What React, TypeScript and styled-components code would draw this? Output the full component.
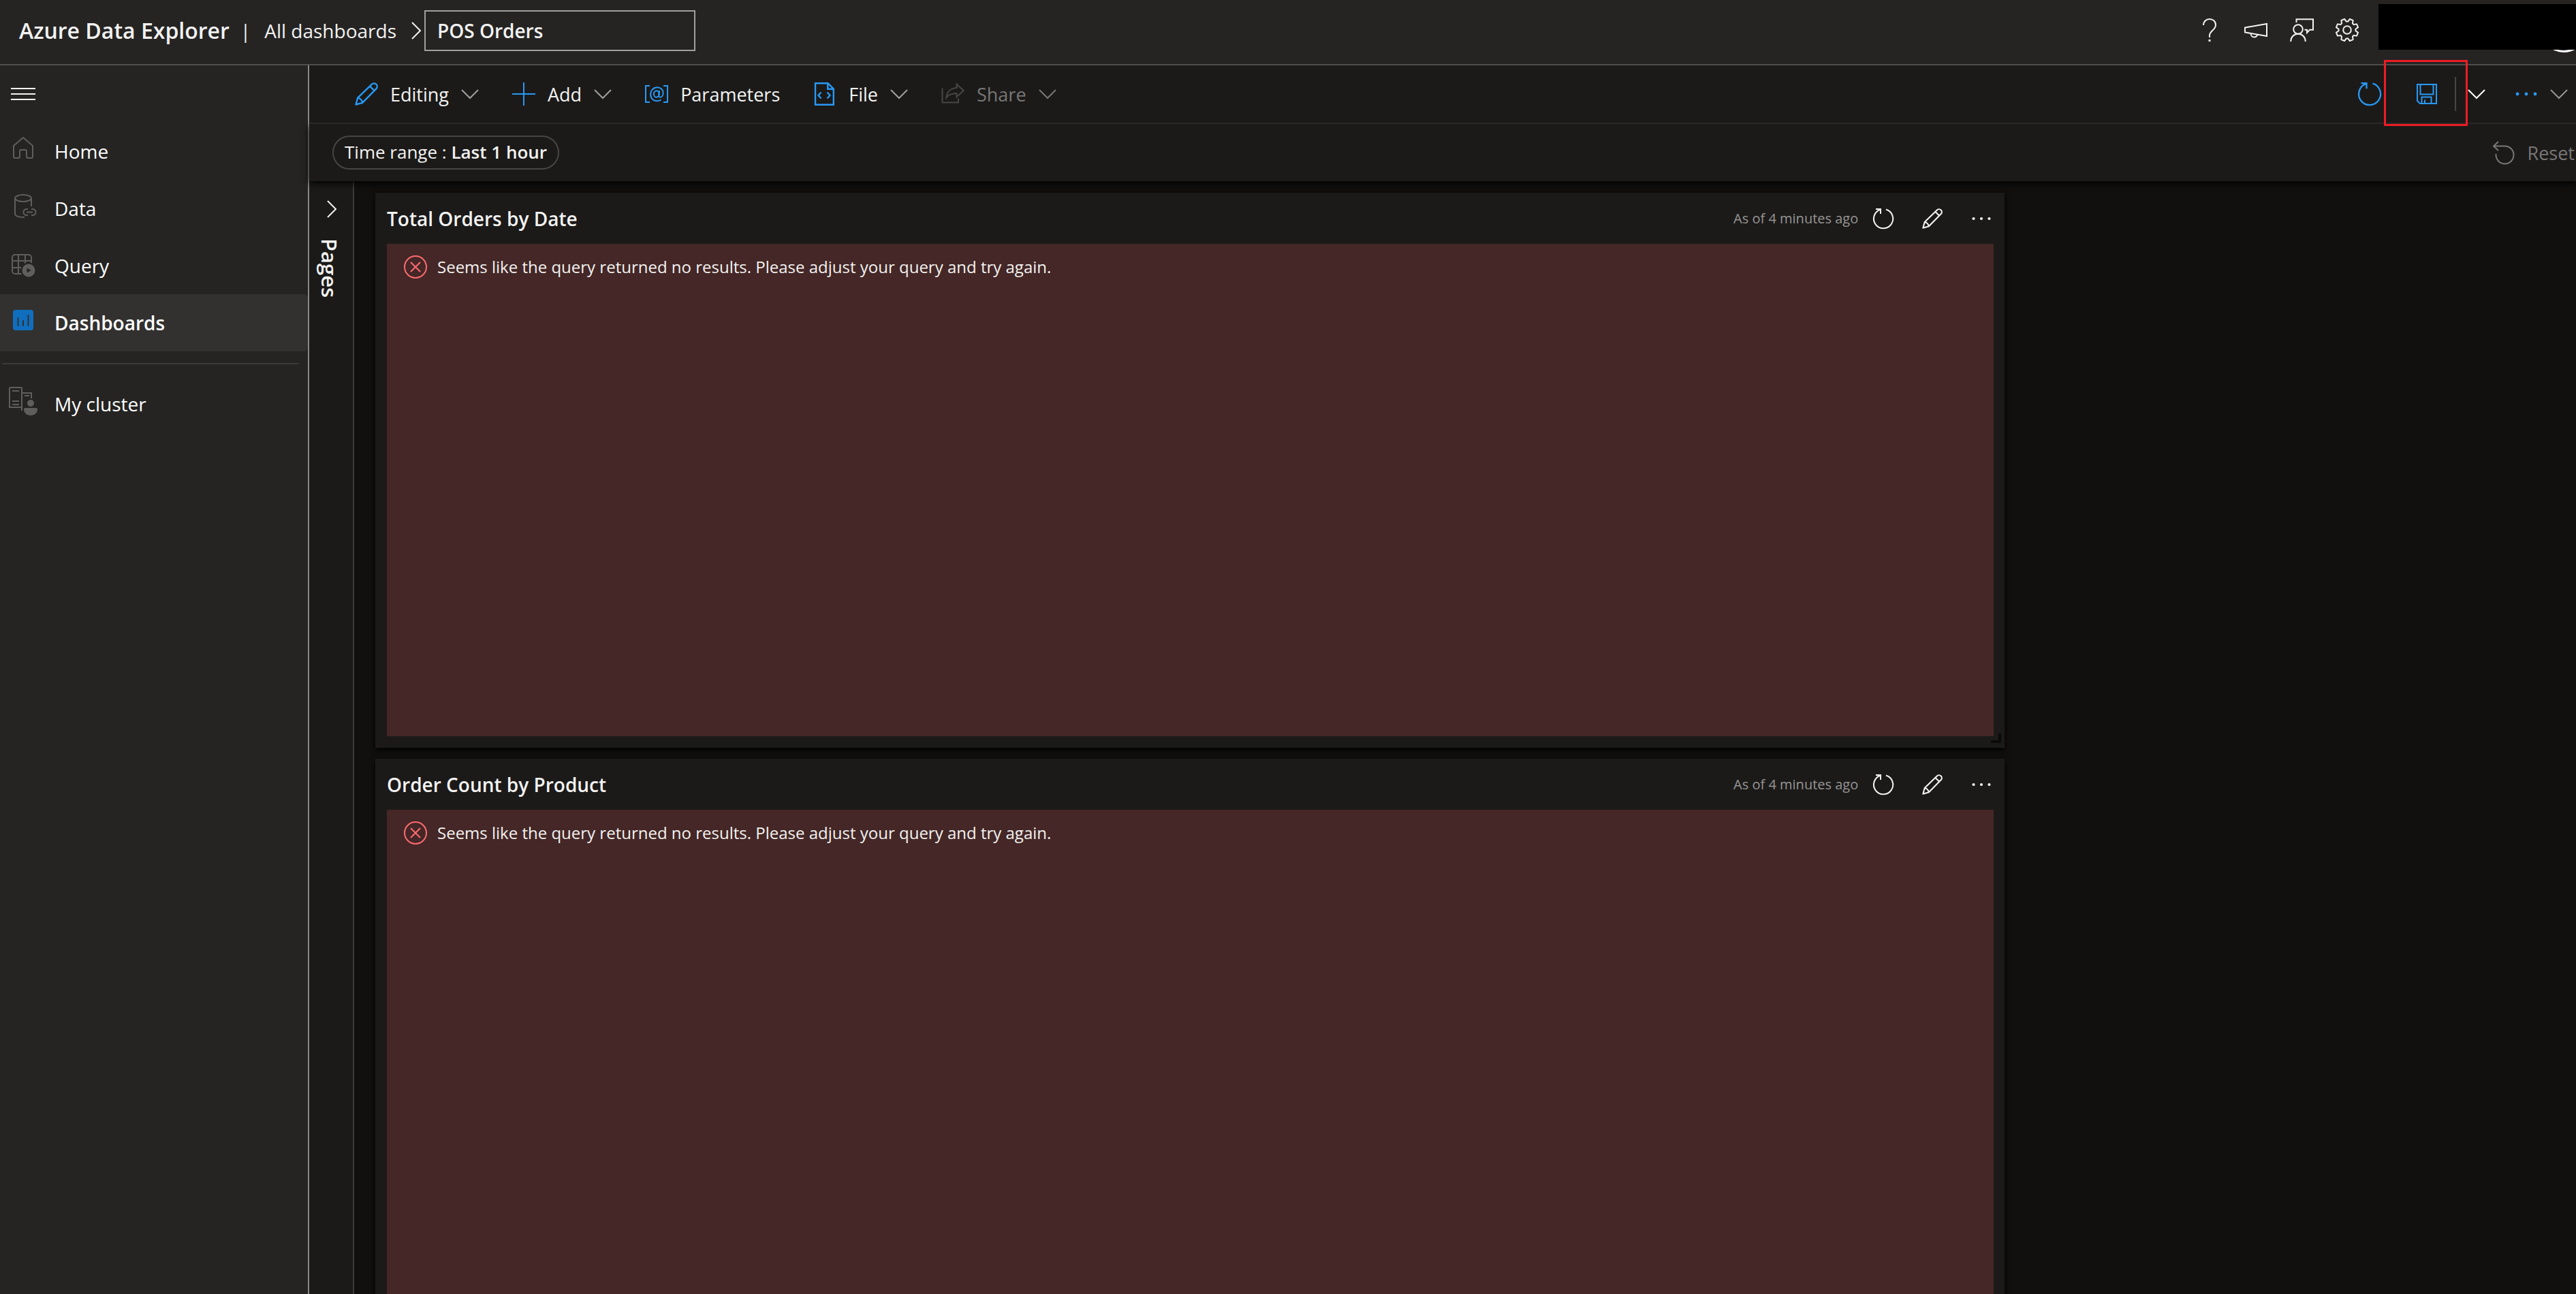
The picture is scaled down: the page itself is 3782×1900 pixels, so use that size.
import React from "react";
import styled, { createGlobalStyle } from "styled-components";

const color = {
  chrome: "#252423",
  surface: "#1b1a19",
  canvas: "#11100f",
  selected: "#323130",
  text: "#f3f2f1",
  muted: "#979593",
  disabled: "#797775",
  line: "#484644",
  blue: "#2899f5",
  errorBg: "#442726",
  error: "#ff6b70",
};

const GlobalStyle = createGlobalStyle`
  *, *::before, *::after { box-sizing: border-box; }
  body {
    margin: 0;
    background: ${color.canvas};
    color: ${color.text};
    font-family: "Open Sans", "Noto Sans", sans-serif;
    font-size: 28px;
    overflow: hidden;
  }
  button, input {
    font: inherit;
    color: inherit;
    background: none;
    border: 0;
    padding: 0;
    margin: 0;
  }
  svg { display: block; flex: none; overflow: visible; }
`;

/* ---------- icons ---------- */

const Svg = styled.svg.attrs({ "aria-hidden": true })<{ $w?: number; $h?: number; $color?: string }>`
  width: ${(p) => p.$w ?? 34}px;
  height: ${(p) => p.$h ?? p.$w ?? 34}px;
  color: ${(p) => p.$color ?? "inherit"};
  fill: none;
  stroke: currentColor;
  stroke-width: 2;
`;

type IconProps = { size?: number; tint?: string };

const ChevronDown = ({ tint }: IconProps) => (
  <Svg viewBox="0 0 26 14" $w={26} $h={14} $color={tint}>
    <path d="M1 1l12 12L25 1" />
  </Svg>
);

const ChevronRight = () => (
  <Svg viewBox="0 0 14 26" $w={14} $h={26}>
    <path d="M1 1l12 12L1 25" />
  </Svg>
);

const Pencil = ({ size, tint }: IconProps) => (
  <Svg viewBox="0 0 34 34" $w={size} $color={tint} strokeLinejoin="round">
    <path
      strokeWidth="2.4"
      d="M1.5 32.5L4.2 22.6 25 2.6a4.6 4.6 0 0 1 6.5 6.5L11.2 29.8zM22 5.6l6.4 6.4M4.2 22.6c3.4.6 6.4 3.8 7 7.2"
    />
  </Svg>
);

const Plus = ({ tint }: IconProps) => (
  <Svg viewBox="0 0 34 34" $color={tint}>
    <path d="M17 0v34M0 17h34" />
  </Svg>
);

const Parameter = ({ tint }: IconProps) => (
  <Svg viewBox="0 0 34 34" $color={tint}>
    <path d="M7 5H1v24h6M27 5h6v24h-6" />
    <path d="M23.5 25.5c-1.8 1.2-3.8 1.8-6 1.8-5.4 0-9.3-4-9.3-9.8 0-6 4.2-10.3 9.8-10.3 5 0 8.600 3.300 8.600 8.200 0 3.800-1.800 6.300-4.200 6.300-1.600 0-2.300-1-2.100-2.700l.9-7" />
    <ellipse cx="16.8" cy="17" rx="3.9" ry="4.8" />
  </Svg>
);

const CodeFile = ({ tint }: IconProps) => (
  <Svg viewBox="0 0 34 34" $color={tint}>
    <path strokeWidth="2.4" d="M3 1.2h18.5l8.3 8.3v23.3H3zM21.3 1.2v8.600h8.500M11.500 14.500L7.500 19l4 4.500M20.500 14.500l4 4.500-4 4.500" />
  </Svg>
);

const Share = ({ tint }: IconProps) => (
  <Svg viewBox="0 0 34 34" $color={tint}>
    <path d="M1.5 8.5v21H25v-6M22.5 2.5l10.200 9.500-10.200 9.500v-5.500c-7 0-12 2-15.200 6.500.6-8.500 6.200-14 15.200-14.500z" />
  </Svg>
);

const Refresh = ({ size, tint }: IconProps) => (
  <Svg viewBox="0 0 34 34" $w={size} $color={tint}>
    <path strokeWidth="2.3" d="M21.500 1.700A16 16 0 1 1 12 1.900M4.500 1.200h8v8" />
  </Svg>
);

const Save = ({ tint }: IconProps) => (
  <Svg viewBox="0 0 34 34" $color={tint}>
    <path d="M3 3h28v28H7l-4-4zM7.500 3v14.500h19V3M9.500 31v-9.500h14V31M14 25.500V31" />
  </Svg>
);

const Reset = () => (
  <Svg viewBox="0 0 34 34">
    <path d="M9 1L2 7.500 9 14M2 7.500h16.500a13 13 0 1 1-13 13V19" />
  </Svg>
);

const More = ({ size, tint }: IconProps) => (
  <Svg viewBox="0 0 34 34" $w={size} $color={tint}>
    <g fill="currentColor" stroke="none">
      <circle cx="4" cy="17" r="2.4" />
      <circle cx="17" cy="17" r="2.4" />
      <circle cx="30" cy="17" r="2.4" />
    </g>
  </Svg>
);

const Help = () => (
  <Svg viewBox="0 0 34 34">
    <path d="M7 10c0-5.500 4-9 9-9s9 3.300 9 8.500c0 3.300-1.600 5.300-4.200 7.700S16 21.500 16 25v3" />
    <path strokeWidth="3" d="M16 31v3" />
  </Svg>
);

const Megaphone = () => (
  <Svg viewBox="0 0 34 34">
    <path d="M1 13.500L33 8v18L1 20.500zM9.500 22c0 3 2 5.500 4.800 5.500s4.500-1.700 5-4" />
  </Svg>
);

const Feedback = () => (
  <Svg viewBox="0 0 34 34">
    <path d="M9.500 6V1.300H34v15.500h-5L25 21v-4.200h-3.500" />
    <circle cx="12" cy="16" r="6.8" />
    <path d="M1.200 34c0-6.500 4.500-11.200 10.800-11.200S22.800 27.500 22.800 34" />
  </Svg>
);

const gearOutline = (() => {
  const at = (deg: number, r: number) => {
    const a = (deg * Math.PI) / 180;
    return `${(17 + r * Math.sin(a)).toFixed(2)} ${(17 - r * Math.cos(a)).toFixed(2)}`;
  };
  const points: string[] = [];
  for (let i = 0; i < 8; i++) {
    const mid = 22.5 + i * 45;
    points.push(at(mid - 17, 12.5), at(mid - 9, 16.5), at(mid + 9, 16.5), at(mid + 17, 12.5));
  }
  return `M${points.join("L")}Z`;
})();

const Gear = () => (
  <Svg viewBox="0 0 34 34" strokeLinejoin="round">
    <path d={gearOutline} />
    <circle cx="17" cy="17" r="5.8" />
  </Svg>
);

const ErrorBadge = () => (
  <Svg viewBox="0 0 34 34" $color={color.error}>
    <circle cx="17" cy="17" r="16" />
    <path d="M10 10l14 14M24 10L10 24" />
  </Svg>
);

const Menu = () => (
  <Svg viewBox="0 0 36 20" $w={36} $h={20}>
    <path d="M0 2h36M0 10h36M0 18h36" />
  </Svg>
);

const NavSvg = styled(Svg).attrs({ viewBox: "0 0 48 48" })`
  width: 48px;
  height: 48px;
  color: #605e5c;
`;

const HomeIcon = () => (
  <NavSvg strokeLinejoin="round">
    <path d="M22 4l14 12v16a2 2 0 0 1-2 2h-5a2 2 0 0 1-2-2v-8a2 2 0 0 0-2-2h-6a2 2 0 0 0-2 2v8a2 2 0 0 1-2 2h-5a2 2 0 0 1-2-2V16z" />
  </NavSvg>
);

const DataIcon = () => (
  <NavSvg>
    <ellipse cx="22" cy="9" rx="12" ry="5" />
    <path d="M10 9v23c0 3 5 5 12 5h2M34 9v12M29 25h-2a4.500 4.500 0 0 0 0 9h2M34 25h2a4.500 4.500 0 0 1 0 9h-2M27 29.500h9" />
  </NavSvg>
);

const QueryIcon = () => (
  <NavSvg>
    <rect x="6" y="8" width="28" height="28" rx="4" />
    <path d="M15 8v28M25 8v28M6 17h28M6 27h28" />
    <circle cx="30" cy="31" r="10.5" fill="currentColor" stroke={color.chrome} />
    <path d="M27.500 27.500v7l6-3.500z" fill={color.chrome} stroke="none" />
  </NavSvg>
);

const DashboardIcon = () => (
  <NavSvg>
    <rect x="7" y="5" width="30" height="30" rx="4" fill="#106ebe" stroke="none" />
    <path stroke={color.selected} strokeLinecap="round" d="M14.500 17v11M22 21v7M29.500 13v15" />
  </NavSvg>
);

const ClusterIcon = () => (
  <NavSvg>
    <path d="M20 34V1a1 1 0 0 0-1-1H3a1 1 0 0 0-1 1v28h18M6 5h10M6 20h10M6 25h10M20 8h14v8M24 12h7" />
    <circle cx="33" cy="23" r="5" fill="currentColor" stroke="none" />
    <path d="M25 30h16a2 2 0 0 1 2 2c0 5-4 9-10 9s-10-4-10-9a2 2 0 0 1 2-2z" fill="currentColor" stroke="none" />
  </NavSvg>
);

/* ---------- header ---------- */

const Shell = styled.div`
  display: flex;
  flex-direction: column;
  height: 100vh;
`;

const Header = styled.header`
  display: flex;
  align-items: center;
  height: 96px;
  padding: 0 0 5px 28px;
  background: ${color.chrome};
  border-bottom: 2px solid #504e4c;
`;

const Brand = styled.h1`
  margin: 0;
  font-size: 32px;
  font-weight: 600;
`;

const Pipe = styled.span`
  margin: 0 20px 0 16px;
`;

const Crumb = styled.a`
  color: inherit;
  text-decoration: none;
  margin-right: 22px;
`;

const NameInput = styled.input`
  width: 398px;
  height: 60px;
  margin-left: 5px;
  padding: 0 17px;
  border: 2px solid #a19f9d;
  font-weight: 600;
`;

const HeaderActions = styled.div`
  display: flex;
  align-items: center;
  gap: 33px;
  margin-left: auto;
  padding-bottom: 2px;
`;

const Account = styled.div`
  position: relative;
  align-self: stretch;
  width: 290px;
  margin-left: 29px;
`;

const Avatar = styled.div`
  position: absolute;
  top: 9px;
  right: -16px;
  width: 68px;
  height: 68px;
  border: 3px solid #fff;
  border-radius: 50%;
`;

const AccountCover = styled.div`
  position: absolute;
  inset: 6px 0 auto 0;
  height: 67px;
  background: #000;
`;

/* ---------- sidebar ---------- */

const Body = styled.div`
  display: flex;
  flex: 1;
  min-height: 0;
`;

const Sidebar = styled.nav`
  flex: none;
  width: 454px;
  background: ${color.chrome};
  border-right: 2px solid #8a8886;
`;

const MenuButton = styled.button`
  display: flex;
  align-items: center;
  height: 84px;
  padding: 0 16px;
`;

const NavItem = styled.a<{ $active?: boolean }>`
  display: flex;
  align-items: center;
  gap: 20px;
  height: 84px;
  padding-left: 12px;
  color: #fff;
  text-decoration: none;
  border-radius: 0 6px 6px 0;
  background: ${(p) => (p.$active ? color.selected : "none")};
  font-weight: ${(p) => (p.$active ? 600 : 400)};
`;

const NavDivider = styled.hr`
  margin: 17px 13px 16px 3px;
  border: 0;
  border-top: 2px solid #3b3a39;
`;

/* ---------- toolbars ---------- */

const Main = styled.main`
  display: flex;
  flex-direction: column;
  flex: 1;
  min-width: 0;
`;

const Bar = styled.div<{ $last?: boolean }>`
  position: relative;
  z-index: ${(p) => (p.$last ? 1 : 2)};
  display: flex;
  flex: none;
  align-items: center;
  justify-content: space-between;
  background: ${color.surface};
  font-size: 27px;
  height: ${(p) => (p.$last ? 84 : 86)}px;
  padding: ${(p) => (p.$last ? "0 2px 0 34px" : "0 12px 0 67px")};
  border-bottom: ${(p) => (p.$last ? "none" : "2px solid #292827")};
  box-shadow: ${(p) => (p.$last ? "0 3px 10px #000" : "none")};
`;

const Commands = styled.div`
  display: flex;
  align-items: center;
  gap: 49px;
`;

const Command = styled.button<{ $tint?: string }>`
  display: flex;
  align-items: center;
  gap: 18px;
  color: ${(p) => p.$tint ?? "inherit"};
`;

const SaveSplit = styled.div`
  position: relative;
  display: flex;
  align-items: center;
  height: 84px;
  margin: 0 -6px 0 -45px;
`;

const SaveButton = styled.button`
  padding: 0 24px 0 46px;
`;

const SaveMenuButton = styled.button`
  display: flex;
  align-items: center;
  height: 50px;
  padding-left: 17px;
  border-left: 2px solid ${color.line};
`;

const Highlight = styled.div`
  position: absolute;
  top: -8px;
  left: 0;
  width: 123px;
  height: 97px;
  border: 3px solid #ed1c24;
  pointer-events: none;
`;

const Pill = styled.button`
  height: 50px;
  padding: 0 16px 3px;
  border: 2px solid ${color.line};
  border-radius: 25px;
  font-size: 26px;
  line-height: 1;

  b {
    font-weight: 600;
  }
`;

/* ---------- canvas ---------- */

const Workspace = styled.div`
  display: flex;
  flex: 1;
  min-height: 0;
`;

const PagesRail = styled.button`
  display: flex;
  flex: none;
  flex-direction: column;
  align-items: center;
  gap: 30px;
  width: 66px;
  padding-top: 28px;
  padding-left: 2px;
  background: ${color.surface};
  border-right: 2px solid #3b3a39;
`;

const RailLabel = styled.span`
  writing-mode: vertical-rl;
  padding-right: 6px;
  font-size: 31px;
  line-height: 40px;
  font-weight: 600;
`;

const Grid = styled.div`
  display: grid;
  flex: 1;
  grid-template-columns: repeat(24, 1fr);
  grid-auto-rows: 815px;
  gap: 16px;
  padding: 17px 36px 0 31px;
  overflow: hidden;
`;

const Tile = styled.section`
  position: relative;
  grid-column: 1 / span 18;
  display: flex;
  flex-direction: column;
  padding: 0 16px 17px 17px;
  background: ${color.surface};
  box-shadow: 0 3px 8px #000;
`;

const TileHeader = styled.div`
  display: flex;
  flex: none;
  align-items: center;
  height: 75px;
  padding-right: 3px;
`;

const TileTitle = styled.h2`
  margin: 0 auto 0 0;
  font-size: 28px;
  font-weight: 600;
`;

const Age = styled.span`
  margin-right: 22px;
  color: ${color.muted};
  font-size: 20px;
`;

const TileActions = styled.div`
  display: flex;
  gap: 42px;
`;

const TileError = styled.div`
  display: flex;
  flex: 1;
  align-items: flex-start;
  gap: 15px;
  padding: 17px 25px;
  background: ${color.errorBg};
  font-size: 24px;
  line-height: 34px;

  p {
    margin: 0;
  }
`;

const ResizeHandle = styled.span`
  position: absolute;
  right: 5px;
  bottom: 7px;
  width: 15px;
  height: 14px;
  border: solid #0b0a0a;
  border-width: 0 4px 4px 0;
`;

const ResultTile = ({ title }: { title: string }) => (
  <Tile>
    <TileHeader>
      <TileTitle>{title}</TileTitle>
      <Age>As of 4 minutes ago</Age>
      <TileActions>
        <button aria-label="Refresh tile"><Refresh size={30} /></button>
        <button aria-label="Edit tile"><Pencil size={30} /></button>
        <button aria-label="More tile options"><More size={30} /></button>
      </TileActions>
    </TileHeader>
    <TileError>
      <ErrorBadge />
      <p>Seems like the query returned no results. Please adjust your query and try again.</p>
    </TileError>
    <ResizeHandle />
  </Tile>
);

const navItems = [
  { label: "Home", Icon: HomeIcon },
  { label: "Data", Icon: DataIcon },
  { label: "Query", Icon: QueryIcon },
  { label: "Dashboards", Icon: DashboardIcon, active: true },
];

const commands = [
  { label: "Editing", Icon: Pencil, menu: true },
  { label: "Add", Icon: Plus, menu: true },
  { label: "Parameters", Icon: Parameter, menu: false },
  { label: "File", Icon: CodeFile, menu: true },
  { label: "Share", Icon: Share, menu: true, disabled: true },
];

export default function App() {
  return (
    <Shell>
      <GlobalStyle />
      <Header>
        <Brand>Azure Data Explorer</Brand>
        <Pipe>|</Pipe>
        <Crumb href="#dashboards">All dashboards</Crumb>
        <ChevronRight />
        <NameInput aria-label="Dashboard name" defaultValue="POS Orders" />
        <HeaderActions>
          <button aria-label="Help"><Help /></button>
          <button aria-label="Announcements"><Megaphone /></button>
          <button aria-label="Feedback"><Feedback /></button>
          <button aria-label="Settings"><Gear /></button>
        </HeaderActions>
        <Account>
          <Avatar />
          <AccountCover />
        </Account>
      </Header>

      <Body>
        <Sidebar>
          <MenuButton aria-label="Toggle navigation"><Menu /></MenuButton>
          {navItems.map(({ label, Icon, active }) => (
            <NavItem key={label} href={`#${label.toLowerCase()}`} $active={active}>
              <Icon />
              {label}
            </NavItem>
          ))}
          <NavDivider />
          <NavItem href="#cluster">
            <ClusterIcon />
            My cluster
          </NavItem>
        </Sidebar>

        <Main>
          <Bar>
            <Commands>
              {commands.map(({ label, Icon, menu, disabled }) => (
                <Command key={label} disabled={disabled} $tint={disabled ? color.disabled : undefined}>
                  <Icon tint={disabled ? color.line : color.blue} />
                  {label}
                  {menu && <ChevronDown tint={disabled ? color.disabled : "#a19f9d"} />}
                </Command>
              ))}
            </Commands>
            <Commands>
              <button aria-label="Refresh dashboard"><Refresh tint={color.blue} /></button>
              <SaveSplit>
                <SaveButton aria-label="Save"><Save tint={color.blue} /></SaveButton>
                <SaveMenuButton aria-label="Save options"><ChevronDown tint="#fff" /></SaveMenuButton>
                <Highlight />
              </SaveSplit>
              <Command aria-label="More commands">
                <More tint={color.blue} />
                <ChevronDown tint="#979593" />
              </Command>
            </Commands>
          </Bar>
          <Bar $last>
            <Pill>
              Time range : <b>Last 1 hour</b>
            </Pill>
            <Command disabled $tint={color.disabled}>
              <Reset />
              Reset
            </Command>
          </Bar>

          <Workspace>
            <PagesRail>
              <ChevronRight />
              <RailLabel>Pages</RailLabel>
            </PagesRail>
            <Grid>
              <ResultTile title="Total Orders by Date" />
              <ResultTile title="Order Count by Product" />
            </Grid>
          </Workspace>
        </Main>
      </Body>
    </Shell>
  );
}
